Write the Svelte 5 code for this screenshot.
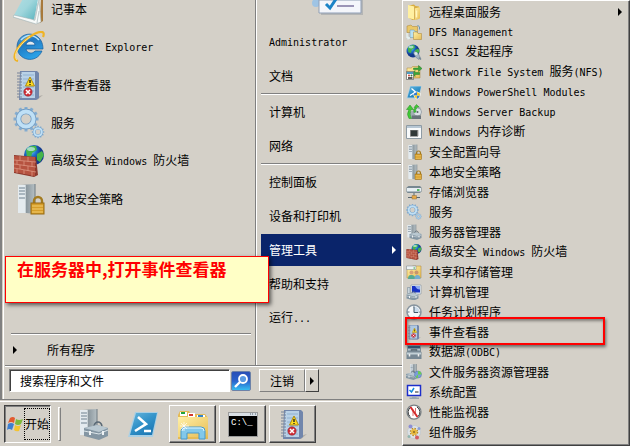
<script lang="ts">
  // Classic-theme start menu with the administrative tools submenu open.

  type Item = { text: string; icon: string; sub?: boolean; marked?: boolean };

  const programs: Item[] = [
    { text: '记事本', icon: 'notepad' },
    { text: 'Internet Explorer', icon: 'ie' },
    { text: '事件查看器', icon: 'event' },
    { text: '服务', icon: 'gears' },
    { text: '高级安全 Windows 防火墙', icon: 'firewall' },
    { text: '本地安全策略', icon: 'policy' },
  ];

  const places: string[][] = [
    ['Administrator', '文档'],
    ['计算机', '网络'],
    ['控制面板', '设备和打印机', '管理工具', '帮助和支持', '运行...'],
  ];
  const active = '管理工具';

  const tools: Item[] = [
    { text: '远程桌面服务', icon: 'folder', sub: true },
    { text: 'DFS Management', icon: 'dfs' },
    { text: 'iSCSI 发起程序', icon: 'iscsi' },
    { text: 'Network File System 服务(NFS)', icon: 'nfs' },
    { text: 'Windows PowerShell Modules', icon: 'psmod' },
    { text: 'Windows Server Backup', icon: 'backup' },
    { text: 'Windows 内存诊断', icon: 'memory' },
    { text: '安全配置向导', icon: 'policy' },
    { text: '本地安全策略', icon: 'policy' },
    { text: '存储浏览器', icon: 'storage' },
    { text: '服务', icon: 'gears' },
    { text: '服务器管理器', icon: 'server' },
    { text: '高级安全 Windows 防火墙', icon: 'firewall' },
    { text: '共享和存储管理', icon: 'share' },
    { text: '计算机管理', icon: 'computer' },
    { text: '任务计划程序', icon: 'clock' },
    { text: '事件查看器', icon: 'event', marked: true },
    { text: '数据源(ODBC)', icon: 'odbc' },
    { text: '文件服务器资源管理器', icon: 'fsrm' },
    { text: '系统配置', icon: 'config' },
    { text: '性能监视器', icon: 'perf' },
    { text: '组件服务', icon: 'component' },
  ];

  const pinned = [
    { label: '服务器管理器', icon: 'server', open: false },
    { label: 'Windows PowerShell', icon: 'powershell', open: false },
    { label: '资源管理器', icon: 'explorer', open: true },
    { label: '命令提示符', icon: 'cmd', open: true },
    { label: '事件查看器', icon: 'event', open: true },
  ];

  // Latin runs are set half as wide as a CJK character.
  const runs = (s: string) => s.split(/([\x20-\x7e]+)/).filter(Boolean);
  const isLatin = (s: string) => /^[\x20-\x7e]/.test(s);

  const teeth = [0, 30, 60, 90, 120, 150, 180, 210, 240, 270, 300, 330];
</script>

{#snippet label(text: string)}
  <span class="label">{#each runs(text) as r}{#if isLatin(r)}<span class="latin">{r}</span>{:else}{r}{/if}{/each}</span>
{/snippet}

{#snippet arrow()}
  <svg class="arrow" viewBox="0 0 4 8" aria-hidden="true"><path d="M0 0L4 4L0 8Z" fill="currentColor" /></svg>
{/snippet}

{#snippet gear(cx: number, cy: number, r: number)}
  <g transform="translate({cx} {cy})">
    {#each teeth as a}
      <rect x={-r * 0.15} y={-r * 1.25} width={r * 0.3} height={r * 0.5} fill="#84acd0" transform="rotate({a})" />
    {/each}
    <circle r={r * 0.76} fill="none" stroke="#6f9ac2" stroke-width={r * 0.56} />
    <circle r={r * 0.76} fill="none" stroke="#bfe0f6" stroke-width={r * 0.4} />
  </g>
{/snippet}

{#snippet tower(x: number, y: number, w: number, h: number)}
  <g>
    <path d="M{x} {y + 1}l{w} -1v{h}l-{w} -2z" fill="url(#steel)" />
    <path d="M{x} {y + 1}h{w * 0.45}v{h - 2}h-{w * 0.45}z" fill="#e4ebef" />
    <path d="M{x + 1} {y + 4}h{w * 0.35}M{x + 1} {y + 7}h{w * 0.35}M{x + 1} {y + 10}h{w * 0.35}M{x + 1} {y + 14}h{w * 0.35}" stroke="#6f8290" stroke-width="1.2" />
    <path d="M{x + w} {y}v{h}" stroke="#6c7880" />
  </g>
{/snippet}

{#snippet toolbox(x: number, y: number)}
  <g transform="translate({x} {y})">
    <path d="M6 4q1-4 4-4t4 4" fill="none" stroke="#596875" stroke-width="1.6" />
    <path d="M-4 6L9 3l11 3v8l-9 4-15-4z" fill="#8496a3" />
    <path d="M-4 6L9 3l11 3-9 4z" fill="#b9c8d1" />
    <path d="M-4 9l15 3 9-4" fill="none" stroke="#dce5e9" />
    <path d="M2 9v4M15 9v4" stroke="#eef2f4" stroke-width="2" />
  </g>
{/snippet}

{#snippet prompt()}
  <path d="M8 4h23l-5 25H1z" fill="#a9cfe4" />
  <path d="M9 5h21l-5 22H3z" fill="url(#shell)" />
  <path d="M11 9l8 7-11 7M17 23h7" fill="none" stroke="#fff" stroke-width="2.6" />
{/snippet}

{#snippet globe(cx: number, cy: number, r: number)}
  <g transform="translate({cx} {cy}) scale({r / 10})">
    <circle r="10" fill="url(#globe)" />
    <path d="M-8-5Q-4-10 2-9L3-5-2-2-3 3-7 2zM3-1l5-3 2 4-4 7-3-2z" fill="#45b449" />
    <ellipse cx="-3" cy="-6" rx="4" ry="2" fill="#d9f3ff" opacity=".65" />
  </g>
{/snippet}

{#snippet icon(name: string)}
  <svg class="icon" viewBox="0 0 32 32" aria-hidden="true">
    {#if name === 'notepad'}
      <path d="M27 0h3v28l-3 2z" fill="#a7793b" />
      <path d="M22 0h6l-1 29-5 2z" fill="#eef4f4" />
      <path d="M13 0h13l-5 29-21-5z" fill="url(#teal)" />
      <path d="M0 24l1-2 21 5 4-20 2 22-5 2z" fill="#f7faf9" stroke="#9fb0b2" stroke-width=".6" />
      <path d="M21 28l4-18M24 30l2-12" stroke="#c0cccd" />
    {:else if name === 'ie'}
      <path d="M30 18H13c1 5 7 5 9 2h7c-6 14-25 9-25-4 0-17 26-18 26 2z" fill="url(#blue)" stroke="#155c9c" stroke-width=".7" />
      <path d="M13 14c1-5 8-5 9 0z" fill="#e4edf2" stroke="#155c9c" stroke-width=".7" />
      <path d="M8 9q9-9 18 0" fill="none" stroke="#b6e2fa" stroke-width="1.6" />
      <path d="M5 30C-3 28 4 15 15 7S33-1 30 6" fill="none" stroke="#efb325" stroke-width="2.2" />
      <path d="M4 29C-1 24 7 13 17 6" fill="none" stroke="#ffe38c" />
    {:else if name === 'event'}
      <path d="M23 28l7-2-6 5H9z" fill="#8b8983" opacity=".5" />
      <path d="M7 2h17l2 2v25l-3 2H6z" fill="#7186ac" />
      <path d="M8 3h14v26H7z" fill="#b9d1e7" />
      <path d="M10 6h11M10 10h11M10 14h11M10 18h11M10 22h11M10 26h11" stroke="#8fb1d0" />
      <path d="M4 4h5M4 7h5M4 10h5M4 13h5M4 16h5M4 19h5M4 22h5M4 25h5M4 28h5" stroke="#79849a" stroke-width="1.2" />
      <path d="M17 8l4.5 9h-9z" fill="#ffdc21" stroke="#ae8b10" />
      <path d="M17 11v3M17 15v1" stroke="#222" stroke-width="1.4" />
      <circle cx="15" cy="23" r="4.2" fill="#cf2f38" stroke="#8d1723" stroke-width=".5" />
      <path d="M13 21l4 4M17 21l-4 4" stroke="#fff" stroke-width="1.5" />
    {:else if name === 'gears'}
      {@render gear(13, 12, 10)}
      {@render gear(25, 25, 5)}
    {:else if name === 'firewall'}
      {@render globe(21, 10, 10)}
      <path d="M1 10l22 2 2 18-4 2-20-4z" fill="#8c392d" />
      <path d="M1 11l21 1v19L1 27z" fill="#b65340" />
      <path d="M1 15l22 2M1 19l22 3M1 23l22 4M7 11v4M15 12v5M4 15v4M11 16v5M19 17v5M7 20v4M15 21v5M4 24v4M11 25v4M19 26v5" stroke="#dc9581" stroke-width=".8" />
    {:else if name === 'policy'}
      {@render tower(5, 1, 17, 30)}
      <path d="M21 20v-2a4 4 0 0 1 8 0v3" fill="none" stroke="#a37b20" stroke-width="2.4" />
      <rect x="18" y="20" width="13" height="11" fill="#d69d29" stroke="#956b15" />
      <path d="M19 23h11M19 26h11M19 29h11" stroke="#f4ce70" />
    {:else if name === 'server'}
      {@render tower(3, 1, 17, 27)}
      {@render toolbox(11, 14)}
    {:else if name === 'powershell'}
      {@render prompt()}
    {:else if name === 'psmod'}
      {@render prompt()}
      <path d="M15 18l7-3 7 3q1 9-7 13-8-4-7-13z" fill="#fff" />
      <path d="M16 19l6-3v7h-6zM22 23h6q-1 4-6 7z" fill="#347bd0" />
      <path d="M22 16l6 3v4h-6zM16 23h6v7q-5-3-6-7z" fill="#f5cc2f" />
    {:else if name === 'explorer'}
      <path d="M1 7l2-4h9l2 3h14l3 4v21H1z" fill="#e5bb56" />
      <path d="M3 4h7v4H3zM11 5h7v4h-7zM20 7h8v3h-8z" fill="#fff" />
      <path d="M4 4h4v2H4z" fill="#24a33c" /><path d="M12 6h4v2h-4z" fill="#d23a2e" /><path d="M21 7h5v2h-5z" fill="#3284cd" />
      <path d="M1 9h30v20H1z" fill="url(#folder)" />
      <path d="M4 31V23q0-4 4-4h16q4 0 4 4v8h-6v-6H10v6z" fill="#82c8ea" stroke="#4699cc" />
      <path d="M5 23q0-3 3-3h16q3 0 3 3" fill="none" stroke="#e0f7ff" />
      <path d="M7 14v9M3 18h9M4 15l6 6M10 15l-6 6" stroke="#fff" stroke-width=".7" />
    {:else if name === 'cmd'}
      <path d="M1 4h30v25H1z" fill="#9b9b9b" />
      <path d="M2 5h28v3H2z" fill="#d9dfe5" />
      <path d="M23 6h1M25 6h1M28 6h1" stroke="#526273" />
      <path d="M2 8h28v20H2z" fill="#000" />
      <text class="console" x="4" y="17">C:\_</text>
    {:else if name === 'folder'}
      <path d="M6 3l10-2 3 3 7 1v25l-13 2-7-4z" fill="#d9ad3d" />
      <path d="M4 2l13 3v26L4 28z" fill="#fff0a1" /><path d="M17 9l11-3v23l-11 3z" fill="url(#folder)" />
      <path d="M17 5v26" stroke="#bb8930" /><path d="M21 13v14" stroke="#fff5be" stroke-width="3" />
    {:else if name === 'dfs'}
      <path d="M2 4l8-2 3 3h10v12H2z" fill="#eac869" stroke="#a98334" />
      <path d="M8 12h8l2 3h4v12H8z" fill="#b9e1f2" stroke="#6497b3" />
      <path d="M15 16h7l2 3h7v12H15z" fill="url(#folder)" stroke="#a98334" />
      <path d="M2 18v10h5M4 25l3 3-3 3" fill="none" stroke="#e9fbff" stroke-width="2" />
      <path d="M23 2l4 4v5" fill="none" stroke="#6497b3" stroke-width="2" />
    {:else if name === 'iscsi'}
      {@render globe(14, 14, 13)}
      <path d="M17 14l8 6 4 8-3 3-7-5-4-8z" fill="#a3b4c2" stroke="#60798c" />
      <circle cx="20" cy="19" r="3" fill="#d8e7ee" /><path d="M26 27l4 4" stroke="#738896" stroke-width="3" />
    {:else if name === 'nfs'}
      <path d="M2 8h9l2-3h15v23H2z" fill="url(#folder)" stroke="#a98334" />
      <path d="M15 8h10V3l7 6-7 6v-4H15zM27 17H18v-4l-6 6 6 6v-4h9z" fill="#38a83a" stroke="#257c28" />
      <path d="M1 15h14v16H1z" fill="#fff" stroke="#333" /><path d="M2 16h12v4H2z" fill="#4e9bc0" />
      <circle cx="6" cy="23" r="2" fill="#c64637" /><circle cx="11" cy="23" r="2" fill="#43733c" /><path d="M4 28h9" stroke="#222" stroke-width="3" />
    {:else if name === 'backup'}
      <path d="M8 16l20-11 3 11-4 14H10z" fill="#a1adb4" /><circle cx="23" cy="16" r="8" fill="#dce2e5" stroke="#6e7b82" />
      <circle cx="23" cy="16" r="2" fill="#5b6268" /><path d="M12 23h18v7H12z" fill="#69737a" />
      <path d="M6 29q-6-8 0-18H1l7-9 7 9h-5q-4 9 1 18zM16 17q-2-7 3-10h-3l5-6 5 5h-3q-5 4-3 10z" fill="#42cb37" stroke="#238b20" />
    {:else if name === 'memory'}
      <path d="M1 3h30v26H1z" fill="#f8fafb" stroke="#8e9ba4" stroke-width="2" /><path d="M2 4h28v4H2z" fill="#b7c7d4" />
      <path d="M10 12v14M14 12v14M18 12v14M22 12v14M8 14h17M8 18h17M8 22h17" stroke="#555" stroke-width="2" />
      <path d="M10 13h12v11H10z" fill="#303838" />
    {:else if name === 'storage'}
      <path d="M1 7l4-3h23l3 3v8l-3 3H3l-2-3z" fill="#778791" /><path d="M2 8h28v7H2z" fill="#e6eef2" />
      <path d="M22 12h5" stroke="#2ba83b" stroke-width="3" /><path d="M16 18v7M4 27h24" stroke="#58666f" stroke-width="2" />
      <path d="M12 23h9v7h-9z" fill="#e4a94b" stroke="#92713c" />
    {:else if name === 'share'}
      <path d="M2 7h9l2-3h17v24H2z" fill="url(#folder)" stroke="#a98334" />
      <path d="M1 4h19v7H1z" fill="#edf3f5" stroke="#74838d" /><path d="M15 8h3" stroke="#31ac3c" stroke-width="2" />
      <circle cx="11" cy="17" r="4" fill="#d8a078" /><circle cx="21" cy="17" r="4" fill="#c7956d" />
      <path d="M4 30q0-9 7-8 7 0 8 8z" fill="#56aa91" /><path d="M17 30q0-9 6-8 6 0 6 8z" fill="#75aed0" />
    {:else if name === 'computer'}
      <path d="M10 2h20v18H10z" fill="#e9f0f5" stroke="#718293" /><path d="M12 4h16v13H12z" fill="#1732c5" />
      <path d="M18 4h10v7q-6 1-10-7z" fill="#8eabf0" /><path d="M19 20h5v5h-5z" fill="#8e9aa3" />
      <path d="M3 7h5v12H3z" fill="#cad5dc" stroke="#6f8290" />
      {@render toolbox(5, 15)}
    {:else if name === 'clock'}
      <circle cx="16" cy="16" r="14" fill="#f7f9fa" stroke="#8996a0" stroke-width="3" />
      <path d="M16 3v4M16 25v4M3 16h4M25 16h4" stroke="#607381" stroke-width="2" />
      <path d="M16 16h11A11 11 0 0 0 16 5z" fill="#cbdceb" /><path d="M16 6v11h8" fill="none" stroke="#405769" stroke-width="2" />
    {:else if name === 'odbc'}
      <path d="M3 3h26v12H3z" fill="#b2c1ca" stroke="#3c5261" /><path d="M4 4h24v5H4z" fill="#304e68" />
      <path d="M11 17v-5h10v5" fill="none" stroke="#4a5963" stroke-width="3" /><path d="M1 16l4-3h22l4 3v14H1z" fill="#778894" />
      <path d="M2 17h28v4H2z" fill="#c3d0d6" /><path d="M7 20v5M25 20v5" stroke="#eee" stroke-width="3" />
    {:else if name === 'fsrm'}
      {@render tower(8, 0, 13, 20)}
      {@render toolbox(4, 14)}
      <circle cx="24" cy="21" r="7" fill="#7c9dda" stroke="#5271ab" /><path d="M24 21V14a7 7 0 0 1 7 7zM24 21l-5 5a7 7 0 0 0 5 2z" fill="#6acd54" />
    {:else if name === 'config'}
      <path d="M3 3h26v20H3z" fill="#fff" stroke="#1c2ecb" stroke-width="3" /><path d="M12 25h9v2h5v3H7v-3h5z" fill="#98a6b1" />
      <path d="M7 12l4 4 5-8" fill="none" stroke="#168bdb" stroke-width="3" /><path d="M18 16h7" stroke="#222" stroke-width="2" />
    {:else if name === 'perf'}
      <circle cx="16" cy="16" r="14" fill="#fff" stroke="#777f83" stroke-width="2.5" />
      <path d="M8 25A12 12 0 0 1 10 6M22 6a12 12 0 0 1 2 19" fill="none" stroke="#3a3a3a" stroke-width="2" />
      <path d="M9 6l14 20" stroke="#d82929" stroke-width="4" /><path d="M14 24V11M19 22V8" stroke="#c33" stroke-width="1.4" />
    {:else if name === 'component'}
      <circle cx="16" cy="16" r="13" fill="#dde3e8" stroke="#b7c0ca" />
      <circle cx="16" cy="16" r="7" fill="none" stroke="#b98a25" stroke-width="3" stroke-dasharray="3 2.5" />
      <circle cx="16" cy="16" r="6" fill="#e8b93c" /><circle cx="16" cy="16" r="2" fill="#8a6a24" />
      <circle cx="9" cy="5" r="4" fill="#8d8fd4" /><circle cx="26" cy="9" r="3" fill="#8a9fd6" />
      <circle cx="22" cy="27" r="4" fill="#d45c62" /><circle cx="6" cy="25" r="3" fill="#8fb5b0" />
    {/if}
  </svg>
{/snippet}

<svg class="defs" aria-hidden="true">
  <defs>
    <linearGradient id="steel"><stop stop-color="#dce4e8" /><stop offset=".5" stop-color="#8c989f" /><stop offset="1" stop-color="#b6c0c4" /></linearGradient>
    <linearGradient id="blue" x2=".5" y2="1"><stop stop-color="#6fc0ee" /><stop offset=".4" stop-color="#2178c0" /><stop offset="1" stop-color="#2ba2e8" /></linearGradient>
    <linearGradient id="shell" x2=".7" y2="1"><stop stop-color="#68b6dc" /><stop offset=".5" stop-color="#3494ca" /><stop offset="1" stop-color="#1d78b4" /></linearGradient>
    <linearGradient id="teal" y2="1"><stop stop-color="#b9e0e4" /><stop offset=".5" stop-color="#9fd6dc" /><stop offset="1" stop-color="#4caeb9" /></linearGradient>
    <linearGradient id="folder" y2="1"><stop stop-color="#fff0a6" /><stop offset="1" stop-color="#e7bd56" /></linearGradient>
    <radialGradient id="globe" cx=".35" cy=".3"><stop stop-color="#79cdf2" /><stop offset=".5" stop-color="#1f75d0" /><stop offset="1" stop-color="#12398c" /></radialGradient>
  </defs>
</svg>

<main class="desktop">
  <div class="left">
    <section class="menu" aria-label="开始菜单">
      <div class="panes">
        <nav class="programs">
          {#each programs as p}
            <button class="program">{@render icon(p.icon)}{@render label(p.text)}</button>
          {/each}
          <hr class="all-rule" />
          <button class="all">{@render arrow()}{@render label('所有程序')}</button>
        </nav>
        <nav class="places">
          <svg class="picture" viewBox="0 0 52 25" aria-hidden="true">
            <path d="M10 0h42v15H10z" fill="#8e949d" opacity=".45" />
            <circle cx="5" cy="3" r="4" fill="#9fc4e4" />
            <path d="M8 0h42v13H8z" fill="#f4f6fb" stroke="#8f9fb6" />
            <path d="M15 4l4 4 6-9" fill="none" stroke="#1b83c6" stroke-width="3" />
            <path d="M26 6h17" stroke="#9b95b7" stroke-width="2" />
          </svg>
          {#each places as group, i}
            {#if i > 0}<hr />{/if}
            {#each group as text}
              <button class="place" class:active={text === active}>
                {@render label(text)}
                {#if text === active}{@render arrow()}{/if}
              </button>
            {/each}
          {/each}
        </nav>
      </div>
      <div class="footer">
        <div class="search">
          <input type="text" aria-label="搜索程序和文件" placeholder="搜索程序和文件" />
          <button class="go" aria-label="搜索">
            <svg viewBox="0 0 16 16" aria-hidden="true">
              <circle cx="10" cy="6" r="4" fill="#5b9be2" stroke="#fff" stroke-width="1.8" />
              <path d="M7 9l-5 5" stroke="#fff" stroke-width="2.4" />
            </svg>
          </button>
        </div>
        <div class="logoff">
          <button>注销</button>
          <button class="more" aria-label="更多选项">{@render arrow()}</button>
        </div>
      </div>
      <div class="callout">在服务器中,打开事件查看器</div>
    </section>

    <div class="taskbar">
      <button class="start">
        <svg class="flag" viewBox="0 0 16 16" aria-hidden="true">
          <path d="M3 2q3-2 5 0L7 7Q4 5 1 7z" fill="#e35b2f" />
          <path d="M9 3q3 2 7 0l-2 5q-3 2-6 0z" fill="#7dba3b" />
          <path d="M1 8q3-2 6 0l-2 6q-3-2-5 0z" fill="#3e7fd0" />
          <path d="M8 9q3 2 6 0l-2 6q-3 1-5-1z" fill="#f4c430" />
        </svg>
        <span>开始</span>
      </button>
      <i class="grip"></i>
      {#each pinned as p}
        <button class="task" class:open={p.open} aria-label={p.label}>{@render icon(p.icon)}</button>
      {/each}
    </div>
  </div>

  <nav class="tools" aria-label="管理工具">
    {#each tools as t}
      <button class="tool" class:marked={t.marked}>
        {@render icon(t.icon)}
        {@render label(t.text)}
        {#if t.sub}{@render arrow()}{/if}
      </button>
    {/each}
  </nav>
</main>

<style>
  :global(body) {
    margin: 0;
    background: #d4d0c8;
  }
  .desktop {
    display: flex;
    overflow: hidden;
    background: #d4d0c8;
    color: #000;
    font: 12px/16px 'Noto Sans CJK SC', sans-serif;
  }
  button,
  input {
    box-sizing: border-box;
    margin: 0;
    padding: 0;
    border: 0;
    border-radius: 0;
    background: none;
    color: inherit;
    font: inherit;
    text-align: left;
  }
  hr {
    width: 100%;
    height: 1px;
    margin: 0;
    border: 0;
    background: #808080;
    border-bottom: 1px solid #fff;
  }
  .defs {
    position: absolute;
    width: 0;
    height: 0;
  }
  .label {
    white-space: pre;
  }
  .latin {
    font-family: 'DejaVu Sans Mono', monospace;
    font-size: 10px;
  }
  .icon {
    flex: none;
    width: 32px;
    height: 32px;
  }
  .arrow {
    flex: none;
    width: 4px;
    height: 8px;
  }
  .console {
    fill: #fff;
    font: 9px 'Liberation Mono', monospace;
  }

  .left {
    display: flex;
    flex: 1;
    flex-direction: column;
    min-width: 0;
  }
  .menu {
    position: relative;
    border-left: 2px solid #808080;
    border-bottom: 1px solid #808080;
    padding: 0 0 7px 3px;
    box-shadow: inset 1px 0 #d4d0c8, inset 2px 0 #fff;
  }
  .panes {
    display: flex;
    border-bottom: 1px solid #808080;
    box-shadow: 0 1px #fff;
  }
  .programs {
    display: flex;
    flex: 1;
    flex-direction: column;
    overflow: hidden;
    padding: 0 4px 0 6px;
    border-right: 1px solid #808080;
  }
  .program {
    display: flex;
    flex: none;
    align-items: center;
    gap: 6px;
    height: 38px;
    padding-left: 2px;
  }
  .program:first-child {
    margin-top: -10px;
  }
  .all-rule {
    margin-top: auto;
  }
  .all {
    display: flex;
    align-items: center;
    gap: 30px;
    height: 30px;
    padding-left: 2px;
  }
  .places {
    display: flex;
    flex-direction: column;
    box-sizing: border-box;
    width: 146px;
    padding: 0 1px 30px 4px;
    border-left: 1px solid #fff;
  }
  .picture {
    width: 52px;
    height: 25px;
    margin-left: 50px;
  }
  .place {
    display: flex;
    align-items: center;
    justify-content: space-between;
    height: 34px;
    padding: 0 5px 0 8px;
  }
  .place.active {
    height: 32px;
    margin: 1px 0;
    background: #0a246a;
    color: #fff;
  }

  .footer {
    display: flex;
    gap: 8px;
    padding: 3px 0 0 4px;
  }
  .search {
    display: flex;
    align-items: center;
    flex: 0 1 242px;
    gap: 1px;
  }
  .search input {
    flex: 1;
    min-width: 0;
    height: 23px;
    padding: 0 10px;
    border: 1px solid;
    border-color: #808080 #fff #fff #808080;
    background: #fff;
    box-shadow: inset 1px 1px #404040;
  }
  .search input::placeholder {
    color: #000;
    opacity: 1;
  }
  .go {
    display: grid;
    place-items: center;
    width: 20px;
    height: 20px;
    border: 1px solid #6d82a8;
    border-radius: 2px;
    background: linear-gradient(#2a4fb6, #2a62cc 50%, #35bdf0);
  }
  .go svg {
    width: 16px;
    height: 16px;
  }
  .logoff {
    display: flex;
  }
  .logoff button {
    width: 46px;
    height: 23px;
    border: 1px solid;
    border-color: #fff #808080 #808080 #fff;
    text-align: center;
  }
  .logoff .more {
    display: grid;
    place-items: center;
    width: 14px;
    border-right-color: #404040;
    border-bottom-color: #404040;
  }
  .callout {
    position: absolute;
    top: 256px;
    left: 3px;
    box-sizing: border-box;
    width: 264px;
    height: 47px;
    padding: 1px 11px;
    border: 1px solid #f00;
    background: #ffffc6;
    box-shadow: 2px 2px 4px rgba(0, 0, 0, 0.6);
    color: #f00;
    font-size: 17px;
    font-weight: bold;
    line-height: 22px;
    white-space: nowrap;
  }

  .taskbar {
    display: flex;
    align-items: center;
    gap: 3px;
    margin-top: 1px;
    padding: 3px 4px;
    border-top: 1px solid #fff;
  }
  .start {
    display: flex;
    align-items: center;
    gap: 1px;
    width: 47px;
    height: 38px;
    padding: 2px;
    border: 1px solid;
    border-color: #404040 #fff #fff #404040;
    box-shadow: inset 1px 1px #808080;
  }
  .start span {
    border: 1px dotted #000;
    line-height: 30px;
    white-space: nowrap;
  }
  .flag {
    flex: none;
    width: 16px;
    height: 16px;
  }
  .grip {
    width: 1px;
    height: 32px;
    margin: 0 5px 0 4px;
    border: 1px solid;
    border-color: #fff #808080 #808080 #fff;
  }
  .task {
    display: grid;
    place-items: center;
    width: 47px;
    height: 38px;
  }
  .task.open {
    border: 1px solid;
    border-color: #fff #404040 #404040 #fff;
    box-shadow: inset -1px -1px #808080;
  }

  .tools {
    box-sizing: border-box;
    width: 228px;
    padding: 1px 1px 2px 2px;
    border: 1px solid;
    border-color: #fff #404040 #404040 #fff;
    box-shadow: inset -1px -1px #808080;
  }
  .tool {
    position: relative;
    display: flex;
    align-items: center;
    gap: 7px;
    width: 100%;
    height: 20px;
    padding: 0 6px 0 1px;
  }
  .tool .icon {
    width: 16px;
    height: 16px;
  }
  .tool .arrow {
    margin-left: auto;
  }
  .tool.marked::after {
    content: '';
    position: absolute;
    top: -5px;
    left: 0;
    width: 196px;
    height: 24px;
    border: 2px solid #f00;
    box-shadow: 1px 2px 3px rgba(0, 0, 0, 0.5), inset 1px 2px 3px rgba(0, 0, 0, 0.4);
  }
</style>
